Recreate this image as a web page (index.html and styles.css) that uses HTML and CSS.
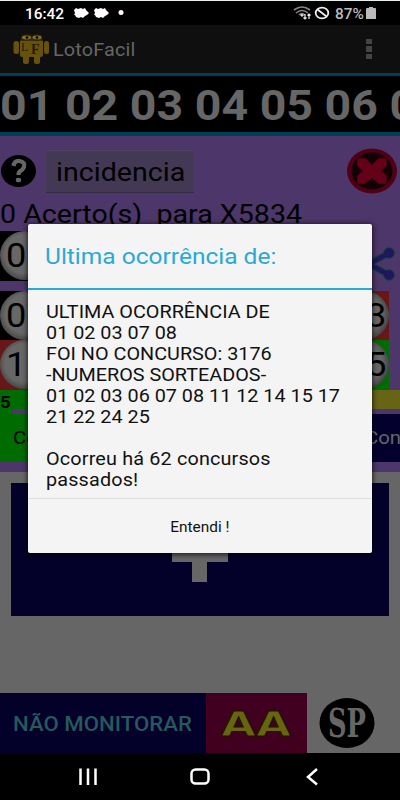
FILE: index.html
```html
<!DOCTYPE html>
<html lang="pt-BR">
<head>
<meta charset="utf-8">
<title>LotoFacil</title>
<link rel="stylesheet" href="styles.css">
</head>
<body>
<div class="phone">
  <header class="status">
    <span class="wide clock">16:42</span>
    <svg class="status-left" width="54" height="14" viewBox="0 0 54 14" fill="#fff"><path d="M1 4l2-2 2 1 3-1 2 1 2-1 1 2 3 3-2 2-2 1-2 2-2-1-2 1-3-1-1-2H1l1-2z"/><path transform="translate(20 0)" d="M1 4l2-2 2 1 3-1 2 1 2-1 1 2 3 3-2 2-2 1-2 2-2-1-2 1-3-1-1-2H1l1-2z"/><circle cx="48" cy="6.500" r="2.500"/></svg>
    <svg class="status-right" width="38" height="16" viewBox="0 0 38 16" fill="none"><path d="M1 5Q9-1 17 5M3 8q6-5 12 0M6 10q3-3 6 0" stroke="#888" stroke-width="1.600"/><path d="M7 10q2-2 4 0l-2 2z" fill="#ddd"/><path d="M12 9v5m-1.500-1.500L12 14l1.500-1.500M16 14V9m-1.500 1.500L16 9l1.500 1.500" stroke="#eee" stroke-width="1.200"/><ellipse cx="29" cy="8" rx="6.300" ry="5.400" stroke="#eee" stroke-width="1.800"/><path d="M24.500 4.500l9 7" stroke="#eee" stroke-width="1.800"/></svg>
    <span class="wide percent">87%</span>
    <svg class="battery" width="10" height="12" viewBox="0 0 10 12"><path d="M3 0h4v1h2q1 0 1 1v10H0V2q0-1 1-1h2z" fill="#bbb"/></svg>
  </header>
  <div class="appbar">
    <svg width="38" height="32" viewBox="0 0 38 32"><g fill="#67520d"><rect x="0.500" y="8" width="5.500" height="13" rx="2.500"/><rect x="31" y="8" width="5" height="13" rx="2.500"/><path d="M7 8h23v14q0 2-2 2H9q-2 0-2-2z"/><rect x="10" y="22" width="6" height="9" rx="2"/><rect x="21" y="22" width="6" height="9" rx="2"/></g><path d="M7 8q2-5 11.500-5T30 8z" fill="#3a2f0b"/><path d="M8 0l5 1h12l5-1-3 3H11z" fill="#171307"/><g stroke="#2a2108" fill="#7c6c32"><ellipse cx="13.500" cy="4.500" rx="5" ry="2.500"/><ellipse cx="24" cy="4.500" rx="5" ry="2.500"/></g><circle cx="14" cy="4.500" r="1.300"/><circle cx="24" cy="4.500" r="1.300"/><text x="8" y="17.500" font-size="12" font-family="Liberation Serif, serif" fill="#251c05">L</text><text x="18" y="21" font-size="14" font-weight="bold" font-family="Liberation Serif, serif" fill="#251c05">F</text></svg>
    <span class="wide app-name">LotoFacil</span>
    <span class="dots"><i></i><i></i><i></i></span>
  </div>
  <div class="ticker"><span class="wide">01 02 03 04 05 06 07</span></div>
  <main class="panel">
    <div class="tools">
      <svg class="help" width="37" height="34" viewBox="0 0 37 34"><ellipse cx="18.500" cy="17" rx="17.500" ry="16" fill="#000"/><path d="M13.500 12q1-5.500 6-5 6 1 4.500 6-1 2.500-3.500 4-2 1-2 4" fill="none" stroke="#666" stroke-width="4.200"/><ellipse cx="18.500" cy="26" rx="2.700" ry="2.300" fill="#666"/></svg>
      <div class="incidence"><span class="wide">incidencia</span></div>
      <svg class="close" width="52" height="46" viewBox="0 0 52 46"><ellipse cx="26" cy="23" rx="25" ry="22.500" fill="#500015"/><ellipse cx="26" cy="23" rx="20.500" ry="18.500" fill="#120006"/><path d="M12 11h7l7 7 7-7h7v7l-6 5 6 5v7h-7l-7-6-7 6h-7v-7l6-5-6-5z" fill="#650019" stroke="#650019" stroke-width="1.500" stroke-linejoin="round"/></svg>
    </div>
    <div class="hits"><span class="wide">0 Acerto(s)&nbsp; para X5834</span></div>
    <div class="row first">
      <div class="cell black"><b class="ball"><span class="wide">0</span></b></div>
      <svg class="share" width="32" height="34" viewBox="0 0 32 34"><g stroke="#0b4235" fill="#0b4235" stroke-width="6.500"><path d="M25 6L5 17l20 11" fill="none"/><circle cx="25" cy="6" r="2.500"/><circle cx="25" cy="28" r="2.500"/></g><path d="M25 6L5 17l20 11" fill="none" stroke="#201560" stroke-width="4"/><circle cx="25" cy="6" r="4.700" fill="#201560"/><circle cx="25" cy="28" r="4.700" fill="#201560"/></svg>
    </div>
    <div class="row">
      <div class="cell black"><b class="ball"><span class="wide">0</span></b></div>
      <div class="cell red right"><b class="ball last"><span class="wide">3</span></b></div>
    </div>
    <div class="row">
      <div class="cell red"><b class="ball"><span class="wide">1</span></b></div>
      <div class="cell green right"><b class="ball last"><span class="wide">5</span></b></div>
    </div>
    <div class="bars">
      <span class="count"><span class="wide">5</span></span>
      <div class="tracks"><div class="track-green"></div><div class="track-yellow"></div></div>
    </div>
    <div class="actions">
      <div class="action-green"><span class="wide">Con</span></div>
      <div class="action-navy"><span class="wide">Con</span></div>
    </div>
  </main>
  <section class="lower">
    <div class="add"><svg width="56" height="90" viewBox="0 0 56 90"><path d="M20 0h15v50h21v20H35v20H20V70H0V50h20z" fill="#666"/></svg></div>
    <div class="footer">
      <div class="monitor"><span class="wide">NÃO MONITORAR</span></div>
      <div class="aa"><svg width="74" height="32" viewBox="0 0 74 32"><text x="2" y="28" textLength="70" lengthAdjust="spacingAndGlyphs">AA</text></svg></div>
      <div class="sp"><svg width="56" height="50" viewBox="0 0 56 50"><ellipse cx="28" cy="25" rx="27.500" ry="25" fill="#000"/><text x="9" y="39" textLength="38" lengthAdjust="spacingAndGlyphs">SP</text></svg></div>
    </div>
  </section>
  <nav class="nav">
    <svg width="400" height="47" viewBox="0 0 400 47" fill="none" stroke="#fff" stroke-width="2.500"><path d="M80.500 15.500v16.500M88 15.500v16.500M95.500 15.500v16.500"/><rect x="191.500" y="16.500" width="17" height="14" rx="4"/><path d="M317 16l-9 8 9 7.500"/></svg>
  </nav>
  <div class="dialog">
    <h1><span class="wide">Ultima ocorrência de:</span></h1>
    <div class="message"><span class="wide">ULTIMA OCORRÊNCIA DE<br>01 02 03 07 08<br>FOI NO CONCURSO: 3176<br>-NUMEROS SORTEADOS-<br>01 02 03 06 07 08 11 12 14 15 17<br>21 22 24 25<br><br><span class="spaced">Ocorreu há 62 concursos<br>passados!</span></span></div>
    <div class="confirm"><span class="wide">Entendi !</span></div>
  </div>
</div>
</body>
</html>
```
FILE: styles.css
```css
* { box-sizing: border-box; }
body { margin: 0; font-family: Roboto, "Liberation Sans", sans-serif; background: #000; }
svg { display: block; flex: none; }
.phone { position: relative; width: 400px; height: 800px; overflow: hidden; display: flex; flex-direction: column; }
.wide { display: inline-block; white-space: nowrap; transform: scaleX(1.1); transform-origin: left center; }

.status { height: 25px; border-top: 1px solid #e8efed; background: #000; display: flex; align-items: center; padding-left: 25px; color: #fff; flex: none; }
.clock { width: 48px; font-size: 14px; font-weight: 500; line-height: 24px; padding-top: 1px; }
.status-left { margin-right: 166px; }
.status-right { margin-right: 4px; }
.percent { width: 31px; font-size: 14px; font-weight: 500; color: #bbb; line-height: 24px; padding-top: 1px; }

.appbar { height: 48px; background: #0f0f0f; display: flex; align-items: center; padding: 0 28px 0 13px; flex: none; }
.app-name { margin-left: 2px; font-size: 18px; letter-spacing: 0.15px; color: #666; flex: 1; }
.dots { display: grid; gap: 2px; }
.dots i { width: 6px; height: 5.500px; background: #444; }

.ticker { height: 63px; border-top: 3px solid #003f59; border-bottom: 4px solid #003f59; background: #000; color: #666; font-size: 42.500px; font-weight: 700; line-height: 59px; flex: none; overflow: hidden; }
.ticker .wide { transform: scaleX(1.094); }

.panel { height: 336px; background: #4d3669; flex: none; overflow: hidden; color: #000; }
.tools { height: 65px; display: flex; align-items: center; padding-top: 5px; }
.incidence { width: 148px; height: 43px; margin-left: 9px; padding-left: 10px; background: #443954; border-bottom: 1px solid #342b42; border-top: 1px solid #514261; font-size: 26px; line-height: 43px; }
.close { margin-left: auto; margin-right: 2px; }
.hits { height: 30px; font-size: 26px; line-height: 27px; }
.row { height: 49.500px; display: flex; }
.first { margin-bottom: 10px; }
.cell { width: 50px; overflow: hidden; }
.right { margin-left: auto; margin-right: 11px; }
.black { background: #000; }
.red { background: #671718; }
.green { background: #006b00; }
.ball { display: block; width: 50px; height: 49px; border-radius: 50%; background: radial-gradient(circle at 48% 47%, #676767 52%, #444 72%); font-weight: 400; font-size: 33px; line-height: 49px; padding-left: 6px; }
.last { padding-left: 27px; }
.share { margin-left: auto; margin-right: 4px; margin-top: 16px; }
.bars { height: 24px; display: flex; }
.count { width: 12px; background: #006b00; font-weight: 700; font-size: 17px; line-height: 25px; }
.tracks { height: 19px; flex: 1; display: flex; }
.track-green { flex: 1; background: #006b00; }
.track-yellow { width: 200px; background: #666516; }
.actions { height: 48px; display: flex; font-size: 18.500px; line-height: 49px; }
.action-green { width: 200px; background: #006b00; padding-left: 13px; }
.action-navy { width: 200px; background: #03002d; color: #666; padding-left: 165px; }

.lower { height: 281px; background: #666; flex: none; display: flex; flex-direction: column; }
.add { height: 133px; margin: 11px 11px 0; background: #03002a; display: flex; justify-content: center; padding-top: 9px; }
.footer { height: 60px; margin-top: auto; display: flex; }
.monitor { width: 206px; background: #03002a; color: #27585c; font-size: 20px; font-weight: 500; line-height: 62px; padding-left: 13px; }
.monitor .wide { transform: scaleX(1.11); }
.aa { width: 101px; background: #420021; padding: 15px 0 0 13px; }
.aa text { font: 700 34px "DejaVu Sans", sans-serif; fill: #69650e; stroke: #171500; stroke-width: 1px; }
.sp { padding: 5px 0 0 12px; }
.sp text { font: 700 39px "DejaVu Serif", serif; fill: #666; }
.nav { height: 47px; background: #000; flex: none; }

.dialog { position: absolute; left: 28px; top: 224px; width: 344px; height: 329px; background: #f4f4f4; border-radius: 2px; box-shadow: 0 1px 5px 1px #000a; }
.dialog h1 { margin: 0; height: 66px; border-bottom: 2px solid #2ba9d6; padding-left: 17px; color: #2ba9d6; font-size: 22px; font-weight: 400; line-height: 65px; }
.dialog h1 .wide { transform: scaleX(1.114); }
.message { height: 209px; border-bottom: 1px solid #ddd; padding: 10.500px 0 0 17.500px; color: #111; font-size: 18px; line-height: 21px; }
.spaced { letter-spacing: 0.15px; }
.confirm { height: 54px; line-height: 56px; font-size: 14px; color: #111; text-align: center; }
.confirm .wide { transform-origin: center; }
```
